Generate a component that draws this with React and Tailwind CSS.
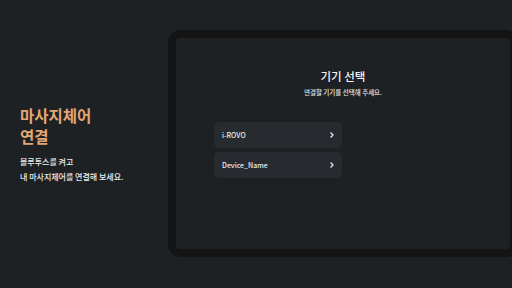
const devices = ['i-ROVO', 'Device_Name']

function Chevron() {
  return (
    <svg width="4" height="6" viewBox="0 0 4 6" fill="none" stroke="#e5e7eb" strokeWidth="1.4" strokeLinecap="round" strokeLinejoin="round">
      <polyline points="1 1 3 3 1 5" />
    </svg>
  )
}

export default function App() {
  return (
    <div
      className="flex h-[288px] w-[512px] overflow-hidden bg-[#1e2124] text-white"
      style={{ fontFamily: '"Noto Sans CJK KR", "Noto Sans", sans-serif' }}
    >
      {/* Left intro */}
      <div className="flex w-[168px] shrink-0 flex-col pl-5 pt-[105px]">
        <h1 className="text-[15.5px] font-bold leading-[21px] text-[#e3a774]">
          마사지체어
          <br />
          연결
        </h1>
        <p className="mt-[7px] text-[8px] font-medium leading-[15px] text-[#eeeeee]">
          블루투스를 켜고
          <br />
          내 마사지체어를 연결해 보세요.
        </p>
      </div>

      {/* Device frame */}
      <div className="mt-[30px] h-[227px] w-[350px] shrink-0 rounded-[12px] border-[8px] border-[#141414] bg-[#141414]">
        <div className="flex h-full flex-col rounded-[4px] bg-[#1e2124] pt-[30px]">
          <div className="flex flex-col items-center">
            <h2 className="text-[11.5px] font-medium leading-[16px] text-[#f3f3f3]">기기 선택</h2>
            <p className="mt-[3px] text-[6.5px] font-medium leading-[10px] text-[#e5e5e5]">
              연결할 기기를 선택해 주세요.
            </p>
          </div>
          <div className="mt-[25px] flex flex-col gap-[4px] pl-[38px]">
            {devices.map((d) => (
              <div
                key={d}
                className="flex h-[26px] w-[128px] items-center justify-between rounded-[5px] bg-[#272a2e] pl-[8px] pr-[8px]"
              >
                <span className="text-[7px] font-medium text-[#ececec]">{d}</span>
                <Chevron />
              </div>
            ))}
          </div>
        </div>
      </div>
    </div>
  )
}
